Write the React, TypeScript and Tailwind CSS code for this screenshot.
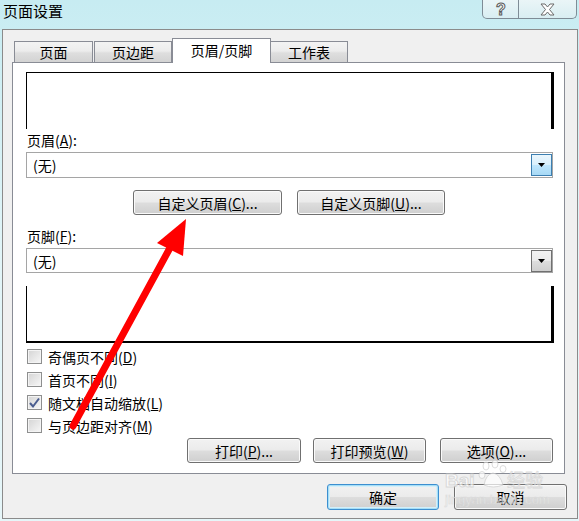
import React from 'react'

const btnBase =
    'flex items-center justify-center rounded-[3px] border bg-[linear-gradient(#f2f2f2,#ebebeb_48%,#dddddd_52%,#cfcfcf)] leading-none'

function Btn({ children, className = '', focused = false }: { children: React.ReactNode; className?: string; focused?: boolean }) {
    return (
        <div
            className={`${btnBase} ${
                focused
                    ? 'border-[#3c8fd0] shadow-[inset_0_0_0_1px_#a6def6,inset_0_0_0_2px_#d4effa]'
                    : 'border-[#707070] shadow-[inset_0_0_0_1px_#fafafa]'
            } ${className}`}
        >
            {children}
        </div>
    )
}

function Combo({ active = false, className = '' }: { active?: boolean; className?: string }) {
    return (
        <div className={`ml-[13px] flex w-[527px] items-center border border-[#a5a5a5] bg-white ${className}`}>
            <span className="pl-[6px] leading-none">(无)</span>
            <div
                className={`ml-auto flex h-[22px] w-[21px] items-center justify-center border ${
                    active
                        ? 'border-[#3c7fb1] bg-[linear-gradient(#eaf6fd,#d9f0fc_48%,#bee6fd_52%,#a7d9f5)]'
                        : 'border-[#707070] bg-[linear-gradient(#f2f2f2,#ebebeb_48%,#dddddd_52%,#cfcfcf)]'
                }`}
            >
                <svg width="7" height="4" viewBox="0 0 7 4">
                    <polygon points="0,0 7,0 3.5,4" fill="#000" />
                </svg>
            </div>
        </div>
    )
}

function Check({ label, checked = false }: { label: React.ReactNode; checked?: boolean }) {
    return (
        <div className="ml-[14px] flex h-[23px] items-center">
            <div className="flex h-[15px] w-[15px] items-center justify-center border border-[#8e8f8f] bg-[linear-gradient(135deg,#d4d4d4,#f7f7f7)] shadow-[inset_0_0_0_1px_#f4f4f4]">
                {checked && (
                    <svg width="13" height="13" viewBox="0 0 13 13">
                        <path d="M2 7 L5 10.5 L11 2.5" stroke="#4a5d8f" strokeWidth="2" fill="none" />
                    </svg>
                )}
            </div>
            <span className="ml-[6px] leading-none">{label}</span>
        </div>
    )
}

export default function App() {
    return (
        <div className="relative h-[521px] w-[579px] overflow-hidden bg-linear-to-b from-[#c7ecf2] via-[#e2f5f8] to-[#e6f6f9] font-['Noto_Sans_CJK_SC','Liberation_Sans',sans-serif] text-[14px] text-black">
            {/* title bar */}
            <div className="flex h-[29px] items-start justify-between">
                <span className="pl-[3px] pt-[2px] text-[15px] leading-[18px]">页面设置</span>
                <div className="mr-[2px] flex h-[19px] overflow-hidden rounded-b-[5px] border border-t-0 border-[#7f8c96] bg-[linear-gradient(#eaf5f7,#d9eef2)]">
                    <div className="flex w-[35px] items-center justify-center">
                        <svg width="14" height="18" viewBox="0 0 14 18">
                            <text x="7" y="15" textAnchor="middle" fontSize="16" fontWeight="bold" fontFamily="Liberation Sans" fill="#fff" stroke="#5a5a5a" strokeWidth="1">?</text>
                        </svg>
                    </div>
                    <div className="flex w-[58px] items-center justify-center border-l border-[#7f8c96]">
                        <svg width="15" height="13" viewBox="0 0 15 13">
                            <path d="M1 1 L5 1 L7.5 4 L10 1 L14 1 L9.5 6.5 L14 12 L10 12 L7.5 9 L5 12 L1 12 L5.5 6.5 Z" fill="#fff" stroke="#6a6a6a" strokeWidth="1" />
                        </svg>
                    </div>
                </div>
            </div>

            {/* dialog body */}
            <div className="ml-[2px] flex h-[490px] w-[576px] flex-col border border-[#8b8b8b] bg-[#f0f0f0]">
                {/* tabs */}
                <div className="relative z-10 ml-[9px] mt-[8px] flex h-[24px] items-end">
                    <div className="ml-[2px] flex h-[21px] w-[79px] items-center justify-center border border-b-0 border-[#898c95] bg-[linear-gradient(#f3f3f3,#ececec_45%,#dedede_55%,#d3d3d3)]">页面</div>
                    <div className="ml-[1px] flex h-[21px] w-[78px] items-center justify-center border border-b-0 border-[#898c95] bg-[linear-gradient(#f3f3f3,#ececec_45%,#dedede_55%,#d3d3d3)]">页边距</div>
                    <div className="mb-[-1px] flex h-[25px] w-[99px] items-center justify-center border border-b-0 border-[#898c95] bg-white pb-[2px]">页眉/页脚</div>
                    <div className="ml-[-1px] flex h-[21px] w-[78px] items-center justify-center border border-b-0 border-[#898c95] bg-[linear-gradient(#f3f3f3,#ececec_45%,#dedede_55%,#d3d3d3)]">工作表</div>
                </div>

                {/* panel */}
                <div className="ml-[9px] flex h-[412px] w-[553px] flex-col border border-[#898c95] bg-white">
                    <div className="ml-[13px] mt-[9px] h-[57px] w-[528px] border-l border-r-[3px] border-t border-black" />

                    <div className="ml-[14px] mt-[3px] h-[16px] leading-[16px]">
                        页眉(<u>A</u>):
                    </div>
                    <Combo active className="mt-[4px] h-[26px]" />

                    <div className="mt-[12px] flex h-[25px]">
                        <Btn className="ml-[120px] w-[149px]">
                            自定义页眉(<u>C</u>)...
                        </Btn>
                        <Btn className="ml-[15px] w-[148px]">
                            自定义页脚(<u>U</u>)...
                        </Btn>
                    </div>

                    <div className="ml-[14px] mt-[13px] h-[16px] leading-[16px]">
                        页脚(<u>F</u>):
                    </div>
                    <Combo className="mt-[4px] h-[25px]" />

                    <div className="ml-[13px] mt-[13px] h-[57px] w-[528px] border-b-2 border-l border-r-[3px] border-black" />

                    <div className="mt-[2px] flex flex-col">
                        <Check label={<>奇偶页不同(<u>D</u>)</>} />
                        <Check label={<>首页不同(<u>I</u>)</>} />
                        <Check checked label={<>随文档自动缩放(<u>L</u>)</>} />
                        <Check label={<>与页边距对齐(<u>M</u>)</>} />
                    </div>

                    <div className="mt-[1px] flex h-[25px]">
                        <Btn className="ml-[174px] w-[114px]">
                            打印(<u>P</u>)...
                        </Btn>
                        <Btn className="ml-[12px] w-[113px]">
                            打印预览(<u>W</u>)
                        </Btn>
                        <Btn className="ml-[14px] w-[113px]">
                            选项(<u>O</u>)...
                        </Btn>
                    </div>
                </div>

                <div className="mt-[10px] flex h-[26px]">
                    <Btn focused className="ml-[324px] w-[112px]">
                        确定
                    </Btn>
                    <Btn className="ml-[15px] w-[113px]">取消</Btn>
                </div>
            </div>

            {/* watermark */}
            <div className="pointer-events-none absolute left-[440px] top-[458px] z-20 opacity-70">
                <svg width="120" height="52" viewBox="0 0 120 52">
                    <text x="5" y="29" fontSize="19" fontWeight="bold" fontFamily="Liberation Sans" fill="#ffffff" stroke="#cfcfcf" strokeWidth="1">Bai</text>
                    <g fill="#ffffff" stroke="#cfcfcf" strokeWidth="1">
                        <ellipse cx="46" cy="8" rx="3" ry="4" />
                        <ellipse cx="55" cy="6" rx="3" ry="4" />
                        <ellipse cx="63" cy="11" rx="3" ry="3.5" />
                        <ellipse cx="42" cy="17" rx="3" ry="3.5" />
                        <path d="M44 27 Q46 16 53 15 Q60 16 63 27 Q53 31 44 27 Z" />
                    </g>
                    <text x="67" y="29" fontSize="18" fontFamily="'Noto Sans CJK SC'" fill="#ffffff" stroke="#cfcfcf" strokeWidth="0.8">经验</text>
                    <text x="5" y="46" fontSize="13" fontFamily="Liberation Sans" fill="#ffffff" stroke="#d2d2d2" strokeWidth="0.6">jingyan.baidu.com</text>
                </svg>
            </div>

            {/* red arrow */}
            <svg className="pointer-events-none absolute left-0 top-0 z-30" width="579" height="521" viewBox="0 0 579 521">
                <line x1="73" y1="426" x2="171" y2="246" stroke="#ff0000" strokeWidth="7" strokeLinecap="round" />
                <polygon points="186,219 183,256 157,243" fill="#ff0000" />
            </svg>
        </div>
    )
}
